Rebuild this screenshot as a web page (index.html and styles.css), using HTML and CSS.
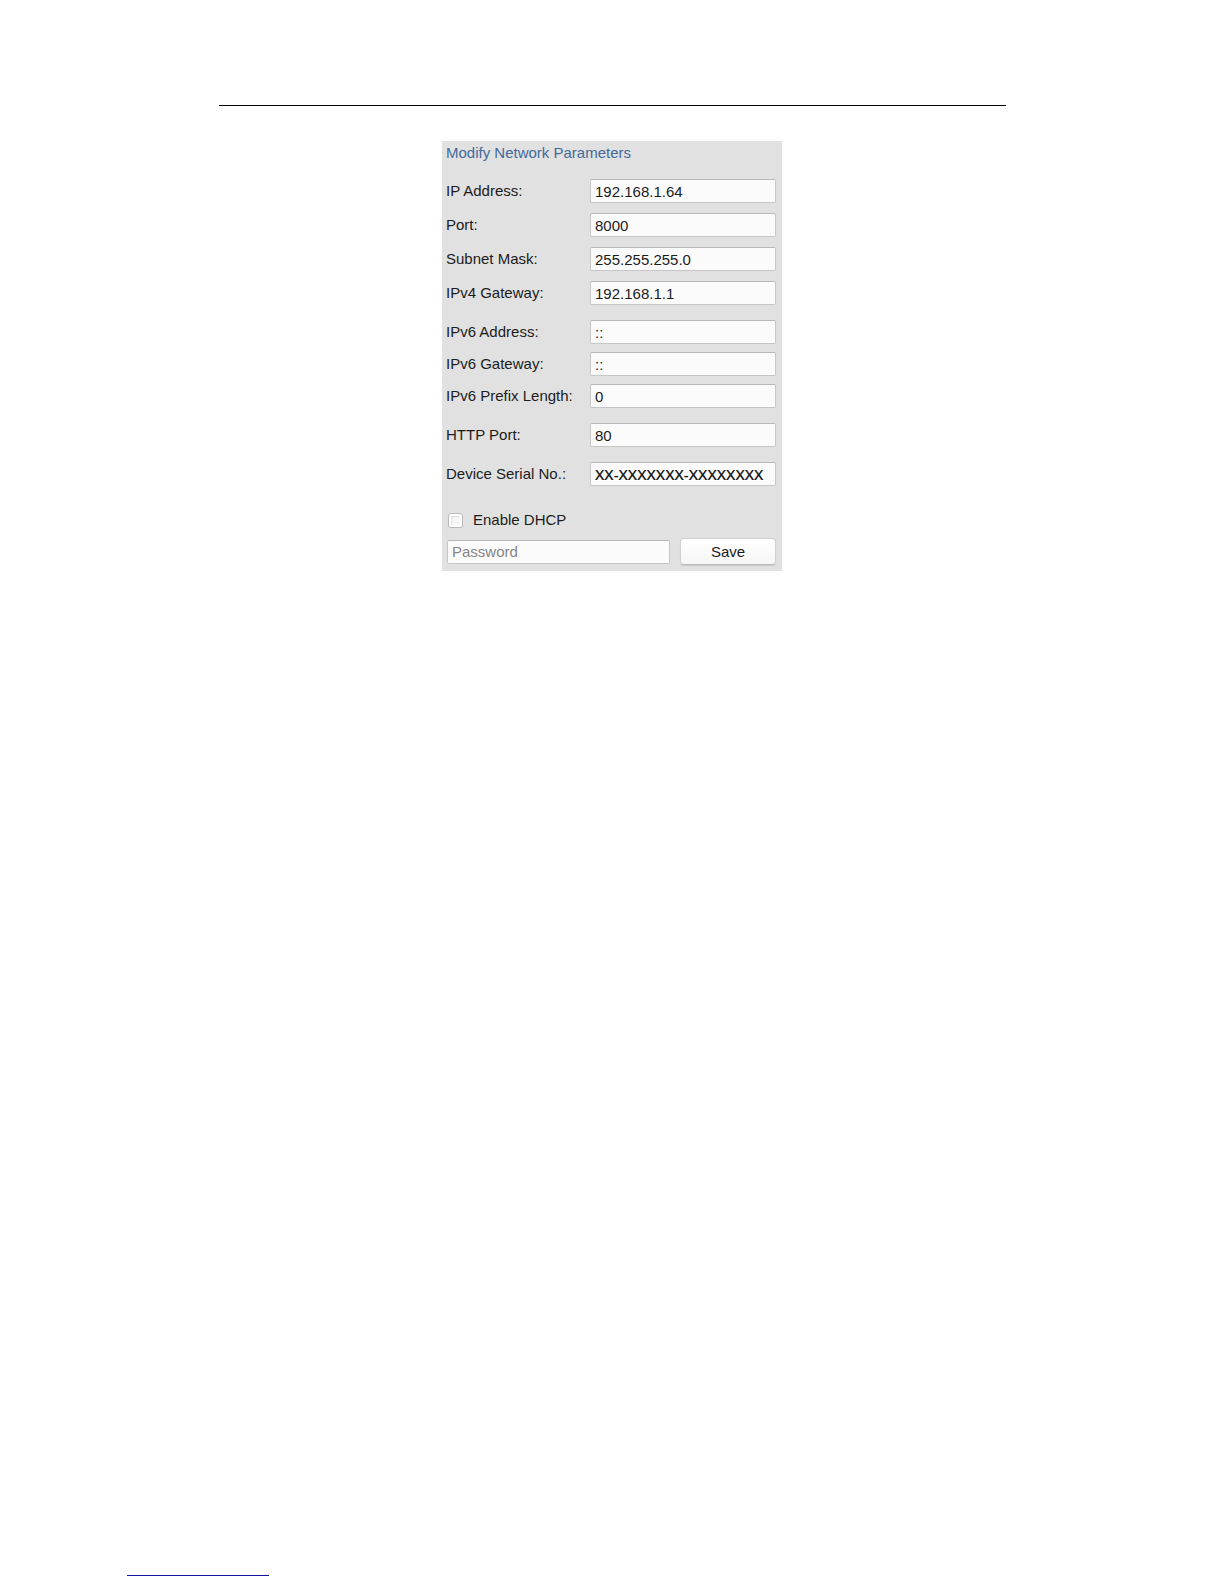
FILE: index.html
```
<!DOCTYPE html>
<html lang="en">
<head>
  <meta charset="UTF-8" />
  <title>Modify Network Parameters</title>
  <meta name="viewport" content="width=device-width, initial-scale=1.0" />
  <link rel="stylesheet" href="styles.css">
</head>
<body>
  <main>
    <hr class="rule" />

    <form class="panel">
      <h1>Modify Network Parameters</h1>

      <!-- IPv4 -->
      <div class="group">
        <div class="row">
          <label for="ip">IP Address:</label>
          <input id="ip" type="text" value="192.168.1.64" />
        </div>
        <div class="row">
          <label for="port">Port:</label>
          <input id="port" type="text" value="8000" />
        </div>
        <div class="row">
          <label for="mask">Subnet Mask:</label>
          <input id="mask" type="text" value="255.255.255.0" />
        </div>
        <div class="row">
          <label for="gateway4">IPv4 Gateway:</label>
          <input id="gateway4" type="text" value="192.168.1.1" />
        </div>
      </div>

      <!-- IPv6 -->
      <div class="group tight">
        <div class="row">
          <label for="ip6">IPv6 Address:</label>
          <input id="ip6" type="text" value="::" />
        </div>
        <div class="row">
          <label for="gateway6">IPv6 Gateway:</label>
          <input id="gateway6" type="text" value="::" />
        </div>
        <div class="row">
          <label for="prefix">IPv6 Prefix Length:</label>
          <input id="prefix" type="text" value="0" />
        </div>
      </div>

      <div class="row">
        <label for="http">HTTP Port:</label>
        <input id="http" type="text" value="80" />
      </div>
      <div class="row">
        <label for="serial">Device Serial No.:</label>
        <input id="serial" class="serial" type="text" value="XX-XXXXXXX-XXXXXXXX" />
      </div>

      <div class="actions">
        <div class="check">
          <input id="dhcp" type="checkbox" />
          <label for="dhcp">Enable DHCP</label>
        </div>
        <div class="submit">
          <input type="password" placeholder="Password" aria-label="Password" />
          <button type="submit">Save</button>
        </div>
      </div>
    </form>
  </main>

  <footer>
    <hr class="footer-rule" />
  </footer>
</body>
</html>
```
FILE: styles.css
```
* { box-sizing: border-box; }
body {
  display: flex;
  flex-direction: column;
  min-height: 100vh;
  margin: 0;
  background: #fff;
  color: #1c1c1c;
  font: 15px/20px "Liberation Sans", Arial, sans-serif;
}
hr { border: 0; height: 1px; margin: 0; }
main {
  flex: 1;
  width: 100%;
  max-width: 787px;
  margin: 0 auto;
  padding-top: 105px;
}
.rule { background: #000; }

.panel {
  display: flex;
  flex-direction: column;
  gap: 15px;
  max-width: 340px;
  margin: 35px auto 0;
  padding: 2px 6px 6px 4px;
  background: #e1e1e1;
}
h1 { margin: 0 0 1px; color: #446a9c; font-size: 15px; font-weight: normal; line-height: 20px; }
.group { display: flex; flex-direction: column; gap: 10px; }
.tight { gap: 8px; }
.row { display: grid; grid-template-columns: 144px 1fr; align-items: center; }

input, button { margin: 0; font: inherit; color: inherit; }
input[type="text"], input[type="password"] {
  width: 100%;
  min-width: 0;
  height: 24px;
  padding: 0 4px;
  border: 1px solid #c6c6c6;
  border-top-color: #b8b8b8;
  border-radius: 2px;
  background: #fbfbfb;
  outline: 0;
}
input::placeholder { color: #858585; opacity: 1; }
input.serial { font-family: "Open Sans", sans-serif; font-weight: 600; }

.actions { display: flex; flex-direction: column; gap: 8px; padding: 9px 0 0 1px; }
.check { display: flex; align-items: center; gap: 10px; padding-left: 1px; }
.check input {
  appearance: none;
  width: 15px;
  height: 15px;
  border: 1px solid #b9b9b9;
  border-radius: 3px;
  background: #f6f6f6;
  box-shadow: inset 0 0 0 2px #fff, inset 3px 3px 1px #e2e2e2;
}
.submit { display: grid; grid-template-columns: 1fr 96px; align-items: center; gap: 10px; }
.submit button {
  height: 27px;
  padding: 0;
  border: 1px solid #d0d0d0;
  border-bottom-color: #bcbcbc;
  border-radius: 4px;
  background: linear-gradient(#fff, #f6f6f6);
  box-shadow: 0 1px 1px #c8c8c8;
}

footer { padding: 0 127px 8px; }
.footer-rule { width: 142px; background: #12129a; }
```
